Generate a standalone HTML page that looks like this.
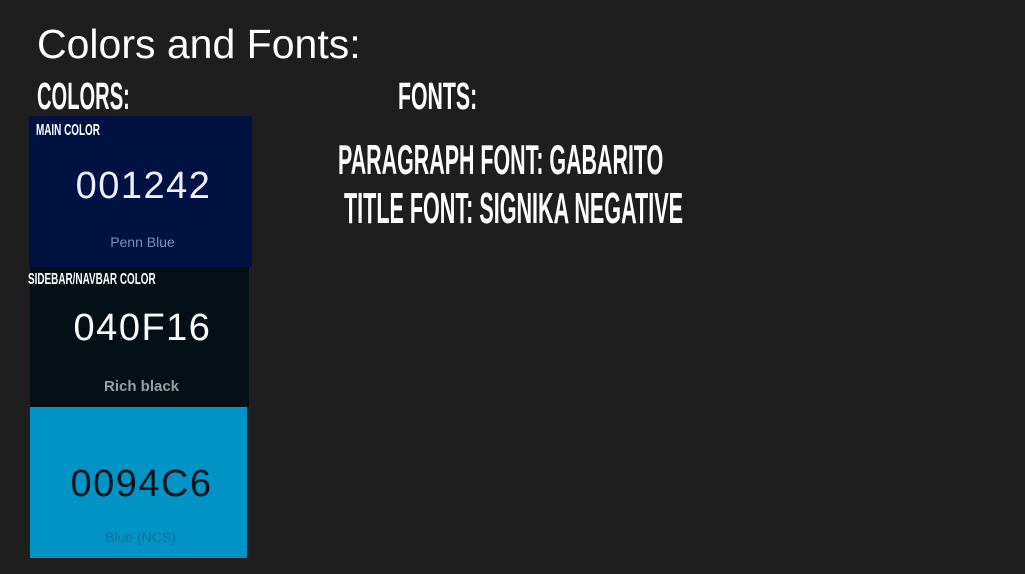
<!DOCTYPE html>
<html><head><style>
body{margin:0;width:1025px;height:574px;background:#1e1e1e;overflow:hidden;position:relative;font-family:"Liberation Sans",sans-serif}
.a{position:absolute;white-space:nowrap;line-height:1}
.b{font-weight:bold;color:#fff;transform-origin:0 0}
.blk{position:absolute}
.hex{position:absolute;left:6px;right:0;text-align:center;font-size:38px;letter-spacing:1.5px;line-height:1}
.nm{position:absolute;left:4px;right:0;text-align:center;font-size:14px;line-height:1}
</style></head><body>
<div class="a" style="left:37px;top:24px;font-size:41px;color:#fff">Colors and Fonts:</div>
<div class="a b" style="left:37px;top:78px;font-size:38px;transform:scaleX(0.53)">COLORS:</div>
<div class="a b" style="left:398px;top:78px;font-size:38px;transform:scaleX(0.56)">FONTS:</div>
<div class="a b" style="left:338px;top:139px;font-size:42px;transform:scaleX(0.51)">PARAGRAPH FONT: GABARITO</div>
<div class="a b" style="left:344px;top:187px;font-size:44px;transform:scaleX(0.49)">TITLE FONT: SIGNIKA NEGATIVE</div>

<div class="blk" style="left:29px;top:116px;width:223px;height:151px;background:#001242">
  <div class="hex" style="top:51px;color:#eef">001242</div>
  <div class="nm" style="top:119px;color:#7f8fb5">Penn Blue</div>
</div>
<div class="blk" style="left:30px;top:267px;width:219px;height:140px;background:#040f16">
  <div class="hex" style="top:42px;color:#fff">040F16</div>
  <div class="nm" style="top:112px;color:#9a9ea2;font-weight:bold;font-size:15px">Rich black</div>
</div>
<div class="blk" style="left:30px;top:407px;width:217px;height:151px;background:#0094c6">
  <div class="hex" style="top:58px;color:#06141c">0094C6</div>
  <div class="nm" style="top:123px;color:#1b6e94">Blue (NCS)</div>
</div>
<div class="a b" style="left:36px;top:123px;font-size:16px;transform:scaleX(0.62)">MAIN COLOR</div>
<div class="a b" style="left:28px;top:272px;font-size:16px;transform:scaleX(0.62)">SIDEBAR/NAVBAR COLOR</div>
</body></html>
